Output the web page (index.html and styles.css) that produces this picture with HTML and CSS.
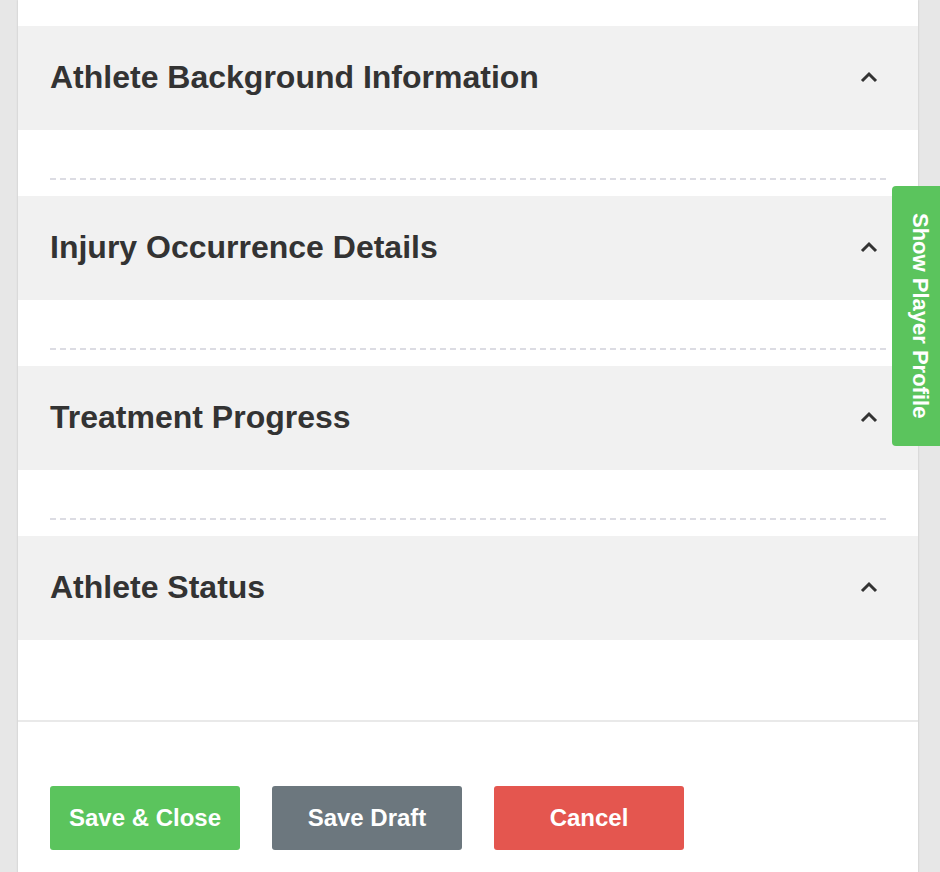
FILE: index.html
```html
<!DOCTYPE html>
<html lang="en">
<head>
<meta charset="utf-8">
<title>Injury Report</title>
<link rel="stylesheet" href="styles.css">
</head>
<body>
<div class="page">
  <main class="panel">
    <section class="section">
      <div class="section-header">
        <h2 class="section-title">Athlete Background Information</h2>
        <svg class="chevron" width="18" height="12" viewBox="0 0 18 12"><path d="M2 10 L9 3 L16 10" fill="none" stroke="#333" stroke-width="3"/></svg>
      </div>
      <div class="section-body"></div>
      <div class="divider"></div>
    </section>
    <section class="section">
      <div class="section-header">
        <h2 class="section-title">Injury Occurrence Details</h2>
        <svg class="chevron" width="18" height="12" viewBox="0 0 18 12"><path d="M2 10 L9 3 L16 10" fill="none" stroke="#333" stroke-width="3"/></svg>
      </div>
      <div class="section-body"></div>
      <div class="divider"></div>
    </section>
    <section class="section">
      <div class="section-header">
        <h2 class="section-title">Treatment Progress</h2>
        <svg class="chevron" width="18" height="12" viewBox="0 0 18 12"><path d="M2 10 L9 3 L16 10" fill="none" stroke="#333" stroke-width="3"/></svg>
      </div>
      <div class="section-body"></div>
      <div class="divider"></div>
    </section>
    <section class="section section-last">
      <div class="section-header">
        <h2 class="section-title">Athlete Status</h2>
        <svg class="chevron" width="18" height="12" viewBox="0 0 18 12"><path d="M2 10 L9 3 L16 10" fill="none" stroke="#333" stroke-width="3"/></svg>
      </div>
      <div class="section-body-last"></div>
    </section>
    <footer class="footer">
      <button class="btn btn-green">Save &amp; Close</button>
      <button class="btn btn-gray">Save Draft</button>
      <button class="btn btn-red">Cancel</button>
    </footer>
  </main>
</div>
<button class="profile-tab">Show Player Profile</button>
</body>
</html>
```

FILE: styles.css
```css
html, body {
  margin: 0;
  padding: 0;
}
body {
  background: #e7e7e7;
  font-family: "Liberation Sans", Arial, Helvetica, sans-serif;
  color: #333;
  overflow: hidden;
  height: 872px;
}
.page {
  padding-left: 18px;
}
.panel {
  width: 900px;
  background: #fff;
  box-shadow: 0 0 2px rgba(0, 0, 0, 0.18);
  padding-top: 26px;
  min-height: 900px;
}
.section-header {
  height: 104px;
  background: #f1f1f1;
  display: flex;
  align-items: center;
  justify-content: space-between;
  padding: 0 40px 0 32px;
}
.section-title {
  margin: 0 0 2px;
  font-size: 32px;
  font-weight: bold;
  color: #333;
  line-height: 1;
}
.chevron {
  display: block;
  margin-top: -2px;
}
.section-body {
  height: 48px;
}
.divider {
  height: 2px;
  margin: 0 32px 16px;
  background: repeating-linear-gradient(to right, #dcdce3 0 6px, transparent 6px 10px);
}
.section-body-last {
  height: 80px;
}
.footer {
  border-top: 2px solid #e9e9e9;
  padding: 64px 32px 0;
  display: flex;
  gap: 32px;
}
.btn {
  width: 190px;
  height: 64px;
  border: none;
  border-radius: 3px;
  color: #fff;
  font-family: "Liberation Sans", Arial, Helvetica, sans-serif;
  font-size: 24px;
  font-weight: bold;
  padding: 0;
  cursor: pointer;
}
.btn-green { background: #5bc45d; }
.btn-gray { background: #6c777e; }
.btn-red { background: #e4564f; }
.profile-tab {
  position: fixed;
  top: 186px;
  right: 0;
  width: 48px;
  height: 260px;
  background: #5bc45d;
  border: none;
  border-radius: 4px 0 0 4px;
  color: #fff;
  font-family: "Liberation Sans", Arial, Helvetica, sans-serif;
  font-size: 22px;
  font-weight: bold;
  writing-mode: vertical-rl;
  padding: 0 0 0 7px;
  display: flex;
  align-items: center;
  justify-content: center;
  cursor: pointer;
}
```
